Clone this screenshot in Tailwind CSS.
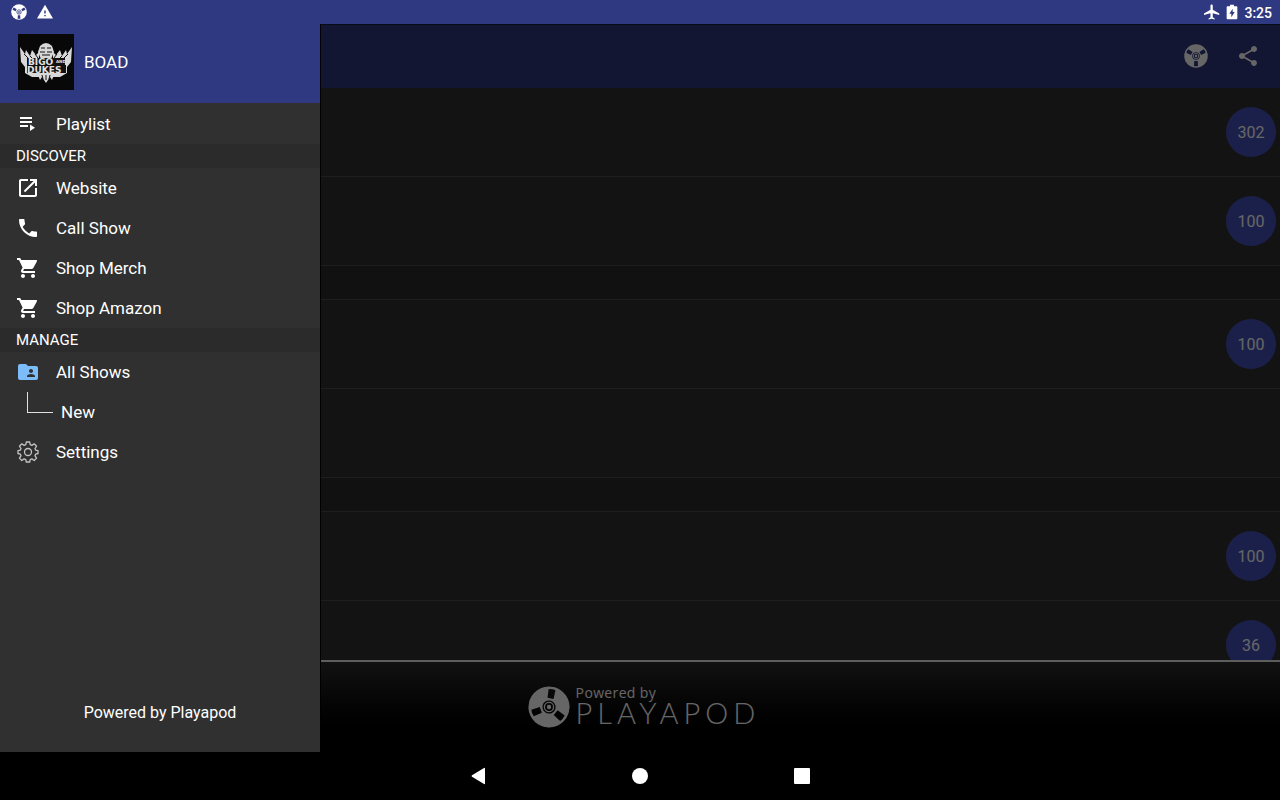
<!DOCTYPE html>
<html lang="en">

<head>
    <meta charset="UTF-8">
    <meta name="viewport" content="width=device-width, initial-scale=1.0">
    <title>BOAD</title>
    <script src="https://cdn.jsdelivr.net/npm/@tailwindcss/browser@4"></script>
</head>

<body class="bg-black h-screen overflow-hidden flex flex-col font-[Roboto,sans-serif] text-white">
    <!-- Shared icons -->
    <svg class="absolute size-0" aria-hidden="true">
        <defs>
            <mask id="reelMask" maskUnits="userSpaceOnUse" x="0" y="0" width="48" height="48">
                <circle cx="24" cy="24" r="23.500" fill="white" />
                <g fill="black">
                    <path id="slot" d="M20 4Q24 2.800 28 4L27.500 14H20.500Z" />
                    <use href="#slot" transform="rotate(120 24 24)" />
                    <use href="#slot" transform="rotate(240 24 24)" />
                    <circle cx="24" cy="24" r="7.500" />
                </g>
                <circle cx="24" cy="24" r="6" fill="white" />
                <circle cx="24" cy="24" r="4.500" fill="black" />
                <circle cx="24" cy="24" r="2.500" fill="white" />
            </mask>
            <symbol id="reel" viewBox="0 0 48 48">
                <rect width="48" height="48" fill="currentColor" mask="url(#reelMask)" />
            </symbol>
            <symbol id="cart" viewBox="0 0 24 24">
                <path fill="currentColor"
                    d="M7 18c-1.100 0-1.990.9-1.990 2S5.900 22 7 22s2-.9 2-2-.9-2-2-2zM1 2v2h2l3.600 7.590-1.350 2.450c-.16.28-.25.61-.25.96 0 1.100.9 2 2 2h12v-2H7.420c-.14 0-.25-.11-.25-.25l.03-.12.9-1.630h7.450c.75 0 1.410-.41 1.750-1.030l3.580-6.490A1 1 0 0 0 20 4H5.210l-.94-2H1zm16 16c-1.100 0-1.990.9-1.990 2s.89 2 1.990 2 2-.9 2-2-.9-2-2-2z" />
            </symbol>
        </defs>
    </svg>

    <!-- Status bar -->
    <header class="h-6 shrink-0 bg-[#2f3981] flex items-center justify-between pl-[11px] pr-2">
        <div class="flex items-center gap-[10px]">
            <svg class="size-4 rotate-180"><use href="#reel" /></svg>
            <svg class="size-4" viewBox="1 1 22 22" fill="currentColor">
                <path d="M1 21h22L12 2 1 21zm12-3h-2v-2h2v2zm0-4h-2v-4h2v4z" />
            </svg>
        </div>
        <div class="flex items-center gap-1">
            <svg class="size-4" viewBox="2 1.500 21 21" fill="currentColor">
                <path
                    d="M22 16v-2l-8.500-5V3.500C13.500 2.670 12.830 2 12 2s-1.500.67-1.500 1.500V9L2 14v2l8.500-2.500V19L8 20.500V22l4-1 4 1v-1.500L13.500 19v-5.500L22 16z" />
            </svg>
            <svg class="size-4" viewBox="0 0 24 24" fill="currentColor">
                <path
                    d="M18.500 3.500H15V1H9v2.500H5.500C4.700 3.500 4 4.200 4 5v16.500c0 .8.7 1.500 1.500 1.500h13c.8 0 1.500-.7 1.500-1.500V5c0-.8-.7-1.500-1.500-1.500zM11 20v-5.500H8L13 7v5h3L11 20z" />
            </svg>
            <span class="text-sm font-medium pt-0.5">3:25</span>
        </div>
    </header>

    <div class="relative flex-1 min-h-0 flex flex-col">
        <!-- Toolbar -->
        <div class="h-16 shrink-0 bg-[#2f3981] flex items-center justify-end gap-7 pr-5">
            <button type="button" aria-label="Player">
                <svg class="size-6 rotate-180"><use href="#reel" /></svg>
            </button>
            <button type="button" aria-label="Share">
                <svg class="size-6" viewBox="0 0 24 24" fill="currentColor">
                    <path
                        d="M18 16.080c-.76 0-1.440.3-1.960.77L8.910 12.700c.05-.23.09-.46.09-.7s-.04-.47-.09-.7l7.050-4.110c.54.5 1.250.81 2.040.81 1.660 0 3-1.340 3-3s-1.340-3-3-3-3 1.340-3 3c0 .24.04.47.09.7L8.040 9.810C7.500 9.310 6.790 9 6 9c-1.660 0-3 1.340-3 3s1.340 3 3 3c.79 0 1.500-.31 2.040-.81l7.120 4.160c-.05.21-.08.43-.08.65 0 1.610 1.310 2.920 2.920 2.920s2.920-1.310 2.920-2.920-1.310-2.920-2.920-2.920z" />
                </svg>
            </button>
        </div>

        <!-- Show list -->
        <ul class="flex-1 min-h-0 overflow-hidden bg-[#303030]">
            <li class="h-[89px] border-b border-[#4c4c4c] flex items-center justify-end pr-1">
                <span class="size-[50px] rounded-full bg-[#4552b8] flex items-center justify-center pt-0.5">302</span>
            </li>
            <li class="h-[89px] border-b border-[#4c4c4c] flex items-center justify-end pr-1">
                <span class="size-[50px] rounded-full bg-[#4552b8] flex items-center justify-center pt-0.5">100</span>
            </li>
            <li class="h-[34px] border-b border-[#4c4c4c] bg-[#2b2b2b]"></li>
            <li class="h-[89px] border-b border-[#4c4c4c] flex items-center justify-end pr-1">
                <span class="size-[50px] rounded-full bg-[#4552b8] flex items-center justify-center pt-0.5">100</span>
            </li>
            <li class="h-[89px] border-b border-[#4c4c4c]"></li>
            <li class="h-[34px] border-b border-[#4c4c4c] bg-[#2b2b2b]"></li>
            <li class="h-[89px] border-b border-[#4c4c4c] flex items-center justify-end pr-1">
                <span class="size-[50px] rounded-full bg-[#4552b8] flex items-center justify-center pt-0.5">100</span>
            </li>
            <li class="h-[89px] border-b border-[#4c4c4c] flex items-center justify-end pr-1">
                <span class="size-[50px] rounded-full bg-[#4552b8] flex items-center justify-center pt-0.5">36</span>
            </li>
        </ul>

        <!-- Footer logo -->
        <footer
            class="h-[92px] shrink-0 border-t-2 border-[#e8e8e8] bg-linear-to-b from-[#2d2d2d] to-black flex items-center justify-center gap-[6px] pl-2">
            <svg class="size-[42px] rotate-[10deg]"><use href="#reel" /></svg>
            <div class="pb-1">
                <p class="font-['Open_Sans',sans-serif] text-sm leading-4 tracking-wide">Powered by</p>
                <p class="font-[Lato,sans-serif] text-[29px] leading-6 font-light tracking-[5px]">PLAYAPOD</p>
            </div>
        </footer>

        <!-- Scrim -->
        <div class="absolute inset-0 bg-black/60 border-t border-black/50"></div>

        <!-- Drawer -->
        <aside class="absolute inset-y-0 left-0 w-[321px] border-r border-black bg-[#303030] flex flex-col">
            <div class="h-20 shrink-0 bg-[#2f3981] border-b border-[#303030] flex items-center gap-[10px] pl-[18px] pb-1">
                <svg class="size-14" viewBox="0 0 56 56">
                    <rect width="56" height="56" fill="#080808" />
                    <g fill="#d8d8d8">
                        <path
                            d="M2 13l5 7 1-4 4 6 2-6 4 5 3-3v8h14v-8l3 3 4-5 2 6 4-6 1 4 5-7-1 15-4 5v6l-7 4H14l-7-4v-6l-4-5z" />
                        <path d="M22 12q6-6 12 0l2 6-3 7H23l-3-7z" />
                        <path d="M15 38h26l-3 5-2-2-2 5-2-3-4 6-4-6-2 3-2-5-2 2z" />
                    </g>
                    <path d="M23 14h4m2 0h4M22 18h5m2 0h5M24 21h8M6 20l5 5M50 20l-5 5M12 22l3 3M44 22l-3 3M17 20l3 4M39 20l-3 4M24 41l1 4M28 41v5M32 41l-1 4"
                        stroke="#111" fill="none" />
                    <path d="M9 24h38v7h1v8H9z" fill="#111" />
                    <g fill="#e2e2e2" font-family="DejaVu Sans" font-weight="bold">
                        <text x="10" y="31" font-size="9">BIGO</text>
                        <text x="38" y="29" font-size="4">AND</text>
                        <text x="9" y="39" font-size="9">DUKES</text>
                    </g>
                </svg>
                <span class="text-[17px] pt-0.5">BOAD</span>
            </div>

            <nav class="flex-1 text-[17px]">
                <a href="#" class="h-10 flex items-center gap-4 pl-4">
                    <svg class="size-6" viewBox="0 0 24 24" fill="currentColor">
                        <path d="M4 5h12v2H4zM4 9h12v2H4zM4 13h8v2H4zM14 12.500v6.500l5-3.250z" />
                    </svg>
                    <span class="pt-0.5">Playlist</span>
                </a>
                <h2 class="h-6 bg-[#2b2b2b] flex items-center pl-4 text-[15px]">DISCOVER</h2>
                <a href="#" class="h-10 flex items-center gap-4 pl-4">
                    <svg class="size-6" viewBox="0 0 24 24" fill="currentColor">
                        <path
                            d="M19 19H5V5h7V3H5c-1.110 0-2 .9-2 2v14c0 1.100.89 2 2 2h14c1.100 0 2-.9 2-2v-7h-2v7zM14 3v2h3.590l-9.830 9.830 1.410 1.410L19 6.410V10h2V3h-7z" />
                    </svg>
                    <span class="pt-0.5">Website</span>
                </a>
                <a href="#" class="h-10 flex items-center gap-4 pl-4">
                    <svg class="size-6" viewBox="0 0 24 24" fill="currentColor">
                        <path
                            d="M6.620 10.790c1.440 2.830 3.760 5.140 6.590 6.590l2.200-2.200c.27-.27.67-.36 1.020-.24 1.120.37 2.330.57 3.570.57.55 0 1 .45 1 1V20c0 .55-.45 1-1 1-9.390 0-17-7.610-17-17 0-.55.45-1 1-1h3.500c.55 0 1 .45 1 1 0 1.250.2 2.450.57 3.570.11.35.03.74-.25 1.020l-2.200 2.200z" />
                    </svg>
                    <span class="pt-0.5">Call Show</span>
                </a>
                <a href="#" class="h-10 flex items-center gap-4 pl-4">
                    <svg class="size-6"><use href="#cart" /></svg>
                    <span class="pt-0.5">Shop Merch</span>
                </a>
                <a href="#" class="h-10 flex items-center gap-4 pl-4">
                    <svg class="size-6"><use href="#cart" /></svg>
                    <span class="pt-0.5">Shop Amazon</span>
                </a>
                <h2 class="h-6 bg-[#2b2b2b] flex items-center pl-4 text-[15px]">MANAGE</h2>
                <a href="#" class="h-10 flex items-center gap-4 pl-4">
                    <svg class="size-6 text-[#7cbcf8]" viewBox="0 0 24 24" fill="currentColor">
                        <path
                            d="M20 6h-8l-2-2H4c-1.100 0-1.990.9-1.990 2L2 18c0 1.100.9 2 2 2h16c1.100 0 2-.9 2-2V8c0-1.100-.9-2-2-2zm-5 3c1.100 0 2 .9 2 2s-.9 2-2 2-2-.9-2-2 .9-2 2-2zm4 8h-8v-1c0-1.330 2.670-2 4-2s4 .67 4 2v1z" />
                    </svg>
                    <span class="pt-0.5">All Shows</span>
                </a>
                <a href="#" class="h-10 flex items-center gap-2 pl-[27px]">
                    <span class="w-[26px] h-[21px] self-start border-l border-b border-[#e0e0e0]"></span>
                    <span class="pt-0.5">New</span>
                </a>
                <a href="#" class="h-10 flex items-center gap-4 pl-4">
                    <svg class="size-6" viewBox="0 0 24 24" fill="none" stroke="#c4c4c4" stroke-width="1.300"
                        stroke-linejoin="round">
                        <path
                            d="M10.300 2h3.400l.5 2.700 1.700.7 2.300-1.600 2.400 2.400-1.600 2.300.7 1.700 2.300.5v2.800l-2.300.6-.7 1.700 1.600 2.300-2.400 2.400-2.300-1.600-1.700.7-.5 2.400h-3.400l-.5-2.400-1.700-.7-2.300 1.600-2.400-2.400L5 15.800l-.7-1.700L2 13.500v-2.800l2.300-.5L5 8.500 3.400 6.200l2.400-2.400 2.300 1.600 1.700-.7z" />
                        <circle cx="12" cy="12" r="3.500" />
                    </svg>
                    <span class="pt-0.5">Settings</span>
                </a>
            </nav>

            <p class="text-center pb-[27px]">Powered by Playapod</p>
        </aside>
    </div>

    <!-- Navigation bar -->
    <div class="h-12 shrink-0 bg-black flex items-center justify-center gap-[138px]">
        <button type="button" aria-label="Back">
            <svg class="size-6" viewBox="0 0 24 24" fill="currentColor">
                <path d="M19 4.500v15q0 1-1 .5L6 12.800q-1-.8 0-1.600L18 4q1-.5 1 .5z" />
            </svg>
        </button>
        <button type="button" aria-label="Home">
            <svg class="size-6" viewBox="0 0 24 24" fill="currentColor">
                <circle cx="12" cy="12" r="8" />
            </svg>
        </button>
        <button type="button" aria-label="Recent apps">
            <svg class="size-6" viewBox="0 0 24 24" fill="currentColor">
                <rect x="4" y="4" width="16" height="16" rx="1" />
            </svg>
        </button>
    </div>
</body>

</html>
